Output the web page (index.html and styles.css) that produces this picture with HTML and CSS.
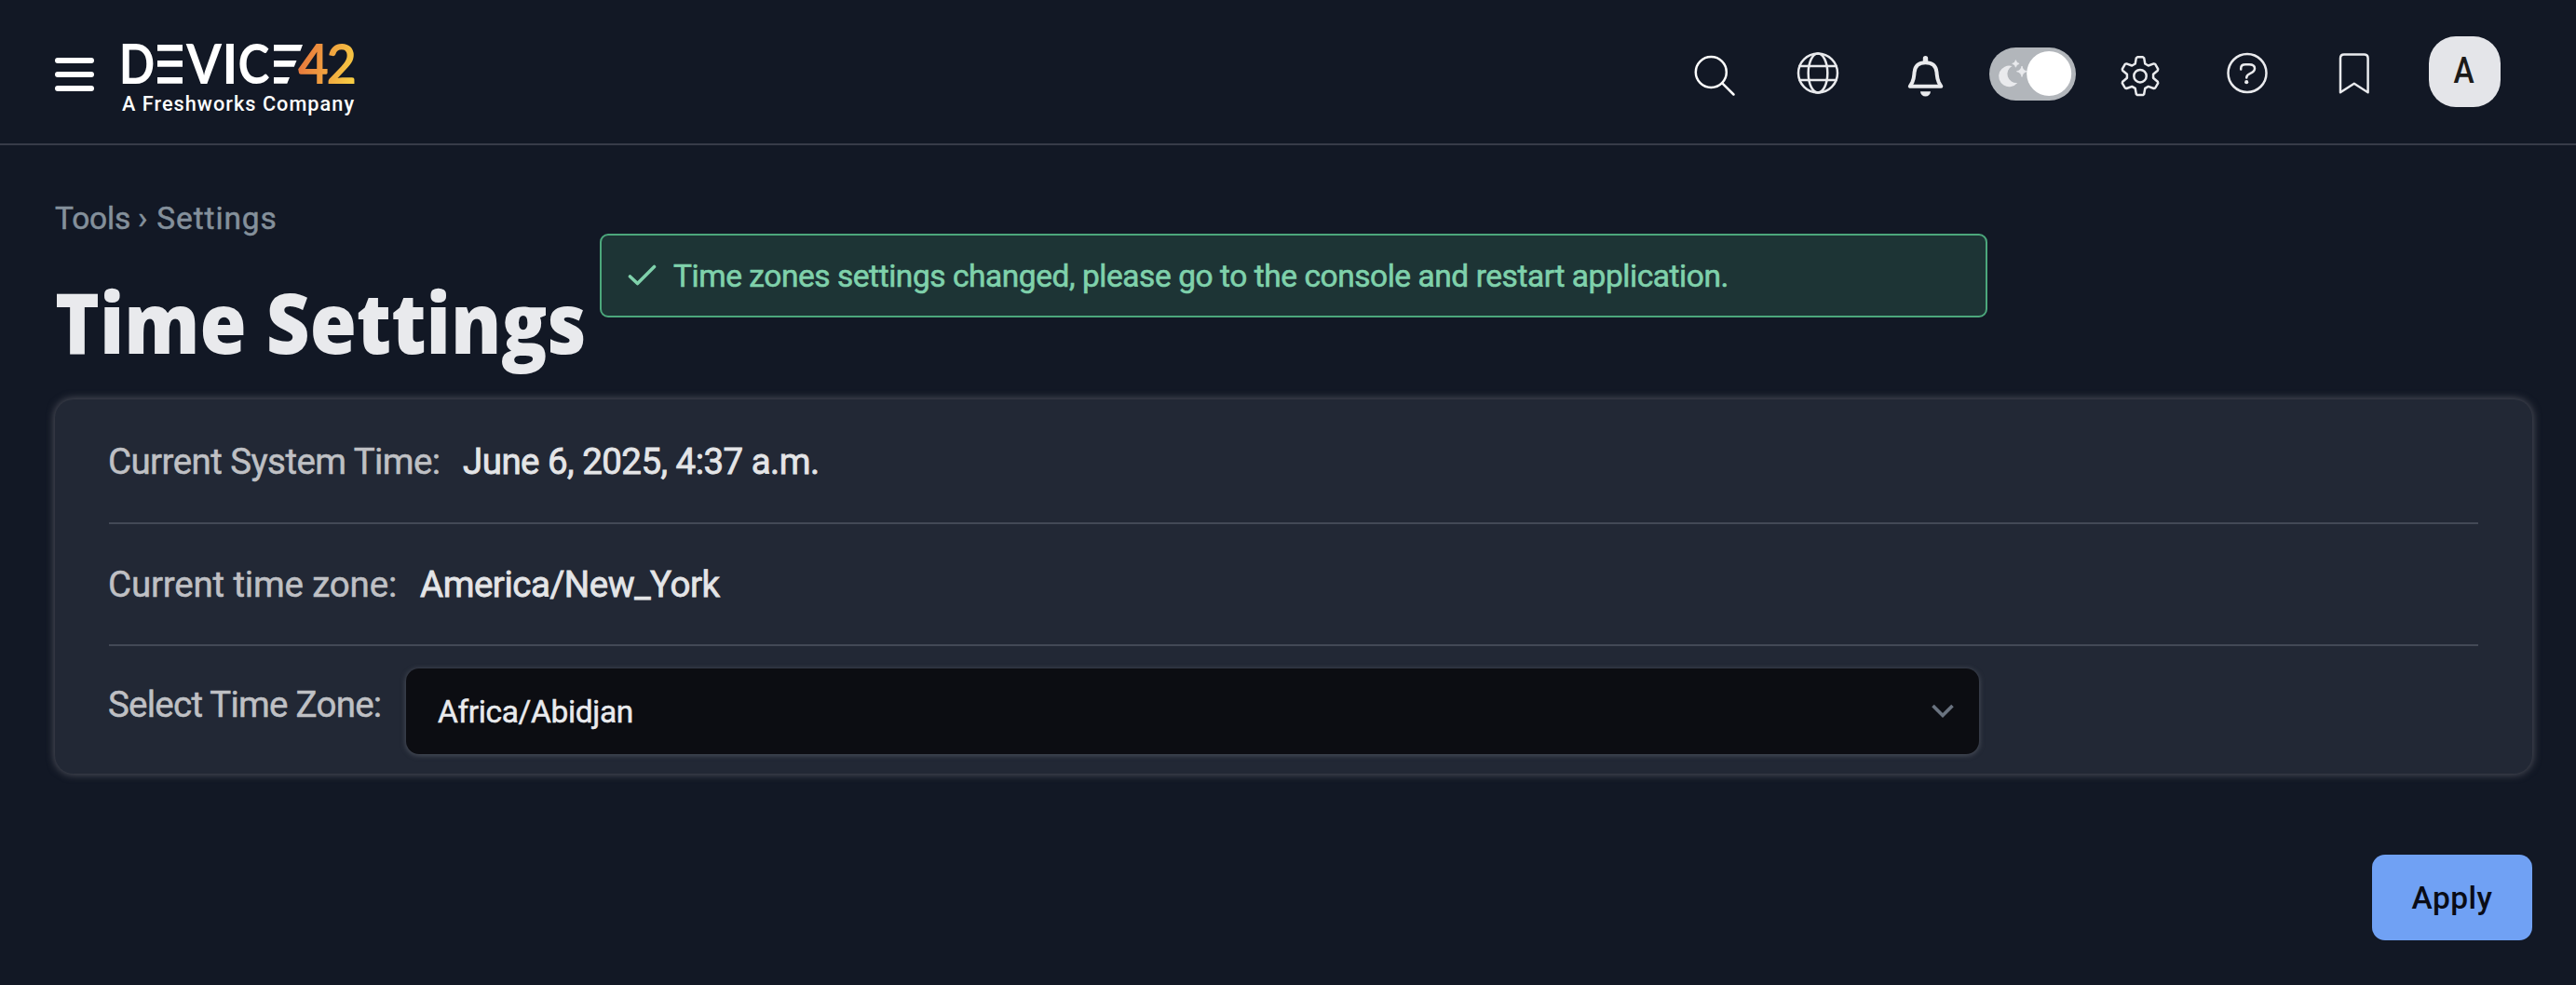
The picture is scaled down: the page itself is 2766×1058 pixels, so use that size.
FILE: index.html
```html
<!DOCTYPE html>
<html lang="en">
<head>
<meta charset="utf-8">
<title>Time Settings</title>
<link rel="stylesheet" href="styles.css">
</head>
<body>
<header class="topbar">
  <button class="menu" aria-label="Menu"><i></i><i></i><i></i></button>
  <svg class="logo" width="254" height="90" viewBox="0 0 254 90">
    <defs>
      <linearGradient id="sun" gradientUnits="userSpaceOnUse" x1="190" y1="30" x2="250" y2="45">
        <stop offset="0" stop-color="#e8763c"/>
        <stop offset="1" stop-color="#f7cc43"/>
      </linearGradient>
    </defs>
    <g class="wordmark">
      <text x="-3.200" y="57.8" textLength="38.500" lengthAdjust="spacingAndGlyphs">D</text>
      <text x="69" y="57.8" textLength="38" lengthAdjust="spacingAndGlyphs">V</text>
      <text x="116" y="57.8" text-anchor="middle">I</text>
      <text x="124.5" y="57.8" textLength="34" lengthAdjust="spacingAndGlyphs">C</text>
      <text x="189" y="57.8" textLength="33" lengthAdjust="spacingAndGlyphs" fill="url(#sun)">4</text>
      <text x="219.500" y="57.8" textLength="32.500" lengthAdjust="spacingAndGlyphs" fill="url(#sun)">2</text>
    </g>
    <path fill="#fff" d="M38 16h27v6.700H38zM38 33h27v6.700H38zM38 51h27v6.800H38zM163 16h31l-2.500 6.700H163zM163 33h24.500l-2.700 6.700H163zM163 51h17l-2.700 6.800H163z"/>
    <text class="tagline" x="0" y="86.500" textLength="249">A Freshworks Company</text>
  </svg>
  <nav class="actions">
    <svg class="icon bright" viewBox="0 0 60 60"><circle cx="29.300" cy="30.500" r="16.500"/><path d="M41.300 42.300 53.500 54.500"/></svg>
    <svg class="icon" viewBox="0 0 60 60"><circle cx="29" cy="31.500" r="21"/><ellipse cx="29" cy="31.500" rx="10.300" ry="21"/><path d="M9.500 24h39M9.500 39h39"/></svg>
    <svg class="icon bell" viewBox="0 0 60 60"><g transform="translate(-.7 0)"><path d="M13.500 45.700H47L44.500 41.500C42.500 37.500 42.700 35 42.200 30.500 41.500 23.500 37 20.300 30.200 20.300S19 23.500 18.300 30.500C17.800 35 18 37.500 16 41.500Z"/><path class="solid" d="M27.500 19v-3.200a2.700 2.700 0 0 1 5.400 0V19zM24.700 51.200h11a5.500 5.200 0 0 1-11 0z"/></g></svg>
    <svg class="toggle" viewBox="0 0 93 57"><rect width="93" height="57" rx="28.500" fill="#b2b6bb"/><g fill="#e9eaed"><path d="M24.500 20A11.300 11.300 0 1 0 30.200 38 9.600 9.600 0 0 1 24.500 20Z"/><path d="M28.400 13.600Q29 16.900 32.100 17.400 29 17.900 28.400 21.200 27.800 17.900 24.700 17.400 27.800 16.900 28.400 13.600ZM35 20Q36 24.900 40.500 25.700 36 26.500 35 31.400 34 26.500 29.500 25.700 34 24.900 35 20Z" stroke="#e9eaed" stroke-width=".8"/></g><circle cx="64.200" cy="28" r="24" fill="#fff"/></svg>
    <svg class="icon" viewBox="0 0 60 60"><g transform="translate(30 34.700)"><path d="M-5.300-13.200-4.200-19.300-3-20.400H3L4.200-19.300 5.300-13.200 8.780-11.190 14.610-13.290 16.170-12.800 19.170-7.600 18.810-6.010 14.080-2.010V2.010L18.810 6.010 19.170 7.600 16.170 12.800 14.610 13.290 8.780 11.190 5.300 13.200 4.200 19.300 3 20.400H-3L-4.200 19.300-5.300 13.200-8.780 11.190-14.610 13.290-16.170 12.800-19.170 7.600-18.810 6.010-14.080 2.010V-2.010L-18.810-6.010-19.170-7.600-16.170-12.800-14.610-13.290-8.780-11.190Z"/><circle r="6.700"/></g></svg>
    <svg class="icon" viewBox="0 0 60 60"><circle cx="30" cy="31.500" r="20.500"/><path d="M23.200 27.600V26.500C23.200 23.500 25 22.300 28 22.300H32C35.800 22.300 38 23.500 38 26.600 38 29.200 36 30.700 33.200 31.800 30.500 33 29.200 34.200 29.200 36.500"/><circle class="solid" cx="29.200" cy="41.200" r="2.100"/></svg>
    <svg class="icon" viewBox="0 0 60 60"><path d="M15 52.300V15.500Q15 11.600 19 11.600H40.600Q44.600 11.600 44.600 15.500V52.300L29.800 42.800Z"/></svg>
    <div class="avatar"><span>A</span></div>
  </nav>
</header>

<div class="toast" role="status">
  <svg width="32" height="24" viewBox="0 0 32 24"><path d="M2.500 13 10.500 20.500 28.500 2.500"/></svg>
  <span>Time zones settings changed, please go to the console and restart application.</span>
</div>

<main class="page">
  <div class="crumbs"><span class="parent">Tools ›</span> Settings</div>
  <h1 class="title"><span>Time Settings</span></h1>
  <section class="card">
    <div class="row first"><span class="label system">Current System Time:</span><span class="value date">June 6, 2025, 4:37 a.m.</span></div>
    <div class="row second"><span class="label zone">Current time zone:</span><span class="value">America/New_York</span></div>
    <div class="row pick">
      <span class="label choose">Select Time Zone:</span>
      <div class="select"><span>Africa/Abidjan</span><svg width="26" height="18" viewBox="0 0 26 18"><path d="M2.500 3 13 13.500 23.500 3"/></svg></div>
    </div>
  </section>
  <button class="apply">Apply</button>
</main>
</body>
</html>
```
FILE: styles.css
```css
* { box-sizing: border-box; }
body {
  margin: 0;
  height: 1058px;
  overflow: hidden;
  background: #121825;
  color: #e9eaed;
  font-family: Roboto, "Liberation Sans", sans-serif;
}
button { border: 0; padding: 0; background: none; font: inherit; }

.topbar {
  display: flex;
  align-items: center;
  height: 156px;
  padding: 0 65.500px 0 59px;
  border-bottom: 2px solid #373b48;
}
.menu { display: flex; flex-direction: column; gap: 9px; width: 42px; margin: 6px 30px 0 0; }
.menu i { height: 6px; border-radius: 3px; background: #fff; }
.logo { overflow: visible; }
.wordmark { font: 700 58.500px Lato, sans-serif; fill: #fff; }
.tagline { font: 500 21.700px Roboto, sans-serif; fill: #fff; }

.actions {
  display: grid;
  grid-template-columns: repeat(8, 115px);
  place-items: center;
  margin-left: auto;
}
.icon { width: 60px; height: 60px; fill: none; stroke: #e9eaed; stroke-width: 2.500; stroke-linecap: round; stroke-linejoin: round; }
.icon.bright { stroke: #fff; }
.icon.bell { stroke-width: 4; }
.icon .solid { fill: #e9eaed; stroke: none; }
.toggle { width: 93px; height: 57px; margin: 5px 2px 0 0; }
.avatar {
  width: 77px;
  height: 76px;
  margin-left: 6px;
  border-radius: 29px;
  background: #e4e5e9;
  color: #1b1a19;
  font-size: 38px;
  font-weight: 500;
  line-height: 74px;
  text-align: center;
}
.avatar span { display: inline-block; transform: scaleX(.88); }

.toast {
  position: absolute;
  left: 644px;
  top: 251px;
  display: flex;
  align-items: center;
  gap: 17px;
  width: 1490px;
  height: 90px;
  padding-left: 28px;
  border: 2px solid #4ca77c;
  border-radius: 9px;
  background: #1d3435;
  color: #7fd1ab;
  font-size: 33.500px;
  letter-spacing: -.45px;
  white-space: nowrap;
  -webkit-text-stroke: .6px;
}
.toast svg, .select svg { fill: none; stroke: #7fd1ab; stroke-width: 3.600; stroke-linecap: round; stroke-linejoin: round; }

.page { display: flex; flex-direction: column; padding: 59px 47px 0 59px; }
.crumbs { color: #84909b; font-size: 33.500px; line-height: 40px; letter-spacing: .9px; -webkit-text-stroke: .5px; }
.parent { margin-right: 1px; letter-spacing: -.2px; }
.title { margin: 35px 0 29px; font: 800 90px/110px "Open Sans", sans-serif; }
.title span { display: inline-block; transform: scaleX(.902); transform-origin: left; }

.card {
  height: 402px;
  padding: 0 58px;
  border-radius: 20px;
  background: #222835;
  box-shadow: 0 0 8px 1px #50525c;
}
.row { display: flex; align-items: center; height: 134px; border-bottom: 2px solid #434956; font-size: 38.500px; line-height: 46px; white-space: nowrap; -webkit-text-stroke: .5px; }
.row.first { padding-top: 2px; }
.row.second { height: 131px; }
.row.pick { align-items: flex-start; height: 137px; padding-top: 24px; border: 0; }
.label { color: #bfc0c4; letter-spacing: -.18px; text-indent: -1px; }
.label.system { width: 380px; letter-spacing: -.58px; }
.label.zone { width: 334px; }
.label.choose { width: 319px; margin-top: 16px; letter-spacing: -.76px; }
.value { color: #e4e5e7; letter-spacing: -.48px; -webkit-text-stroke: .8px; }
.value.date { letter-spacing: -.54px; }
.select {
  display: flex;
  align-items: center;
  justify-content: space-between;
  width: 1689px;
  height: 92px;
  padding: 0 26px 0 34px;
  border-radius: 14px;
  background: #0c0d12;
  box-shadow: 0 1px 5px 1px #454a55;
  color: #e9eaed;
  font-size: 33.500px;
  letter-spacing: -.36px;
}
.select span { padding-top: 1px; }
.select svg { stroke: #6a7380; stroke-linecap: butt; stroke-linejoin: miter; }
.apply {
  align-self: flex-end;
  width: 172px;
  height: 92px;
  margin-top: 87px;
  border-radius: 14px;
  background: #70a1f4;
  color: #0a0c16;
  font-size: 33.500px;
  font-weight: 500;
  letter-spacing: .5px;
}
```
